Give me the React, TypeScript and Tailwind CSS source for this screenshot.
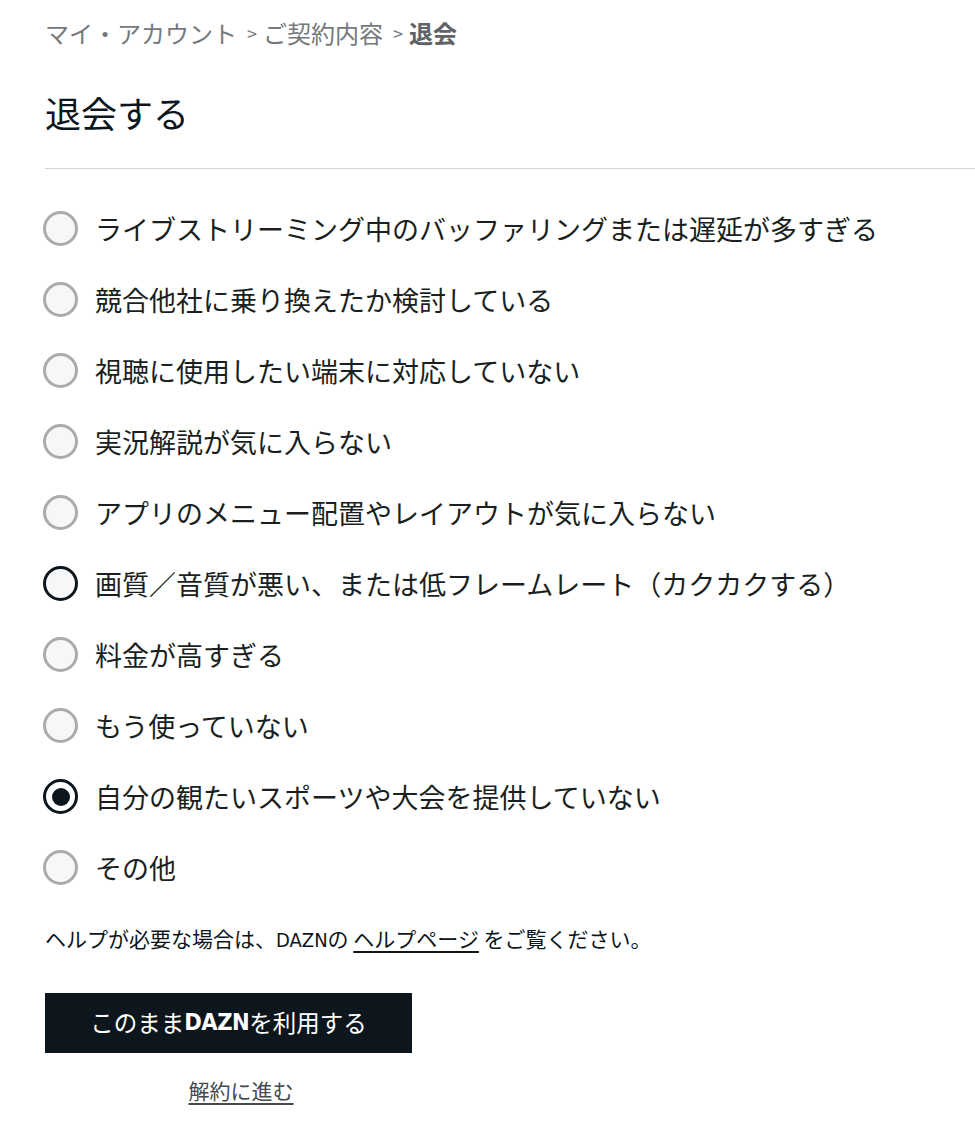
import React from "react";

const JP = { fontFamily: '"Noto Sans CJK JP", "Noto Sans", sans-serif' };
const COND = { fontFamily: '"DejaVu Sans Condensed", "Liberation Sans", sans-serif' };

const reasons = [
  "ライブストリーミング中のバッファリングまたは遅延が多すぎる",
  "競合他社に乗り換えたか検討している",
  "視聴に使用したい端末に対応していない",
  "実況解説が気に入らない",
  "アプリのメニュー配置やレイアウトが気に入らない",
  "画質／音質が悪い、または低フレームレート（カクカクする）",
  "料金が高すぎる",
  "もう使っていない",
  "自分の観たいスポーツや大会を提供していない",
  "その他",
];

function Radio({ state }: { state: "idle" | "hover" | "checked" }) {
  if (state === "checked") {
    return (
      <span className="flex h-[35px] w-[35px] shrink-0 items-center justify-center rounded-full border-[3px] border-[#0c161c] bg-white">
        <span className="h-[18px] w-[18px] rounded-full bg-[#0c161c]" />
      </span>
    );
  }
  if (state === "hover") {
    return <span className="h-[35px] w-[35px] shrink-0 rounded-full border-[3px] border-[#0c161c] bg-[#f5f7f8]" />;
  }
  return <span className="h-[35px] w-[35px] shrink-0 rounded-full border-[3px] border-[#a9abad] bg-[#f5f7f8]" />;
}

export default function App() {
  return (
    <div className="min-h-[1134px] bg-white pl-[43px] pt-[17px] text-[#0c161c]" style={JP}>
      <div className="ml-[2px] flex h-[32px] items-center text-[24px] leading-[32px] text-[#75797c]">
        <span>マイ・アカウント</span>
        <span className="ml-[10px] mr-[6px] text-[18px]">&gt;</span>
        <span>ご契約内容</span>
        <span className="ml-[10px] mr-[6px] text-[18px]">&gt;</span>
        <span className="font-bold text-[#5f6366]">退会</span>
      </div>
      <h1 className="ml-[2px] mt-[41px] h-[44px] text-[36px] font-normal leading-[44px]">退会する</h1>
      <div className="ml-[2px] mt-[34px] border-t border-[#d4d4d4]" />
      <div className="mt-[24px] flex flex-col">
        {reasons.map((r, i) => (
          <label key={i} className="flex h-[71px] cursor-pointer items-center gap-[17px]">
            <Radio state={i === 8 ? "checked" : i === 5 ? "hover" : "idle"} />
            <span className="text-[27px] leading-[34px] text-[#1a1f22]">{r}</span>
          </label>
        ))}
      </div>
      <p className="ml-[2px] mt-[20px] h-[30px] text-[21px] leading-[30px]">
        ヘルプが必要な場合は、<span style={COND} className="text-[20px]">DAZN</span>の{" "}
        <a className="underline underline-offset-4">ヘルプページ</a> をご覧ください。
      </p>
      <button className="ml-[2px] mt-[40px] flex h-[60px] w-[367px] items-center justify-center bg-[#0c161c] text-[23.5px] text-white">
        このまま<span style={COND} className="font-bold tracking-[-0.5px]">DAZN</span>を利用する
      </button>
      <div className="ml-[2px] mt-[22px] w-[392px] text-center">
        <a className="text-[21px] leading-[30px] text-[#45494c] underline underline-offset-4">解約に進む</a>
      </div>
    </div>
  );
}
